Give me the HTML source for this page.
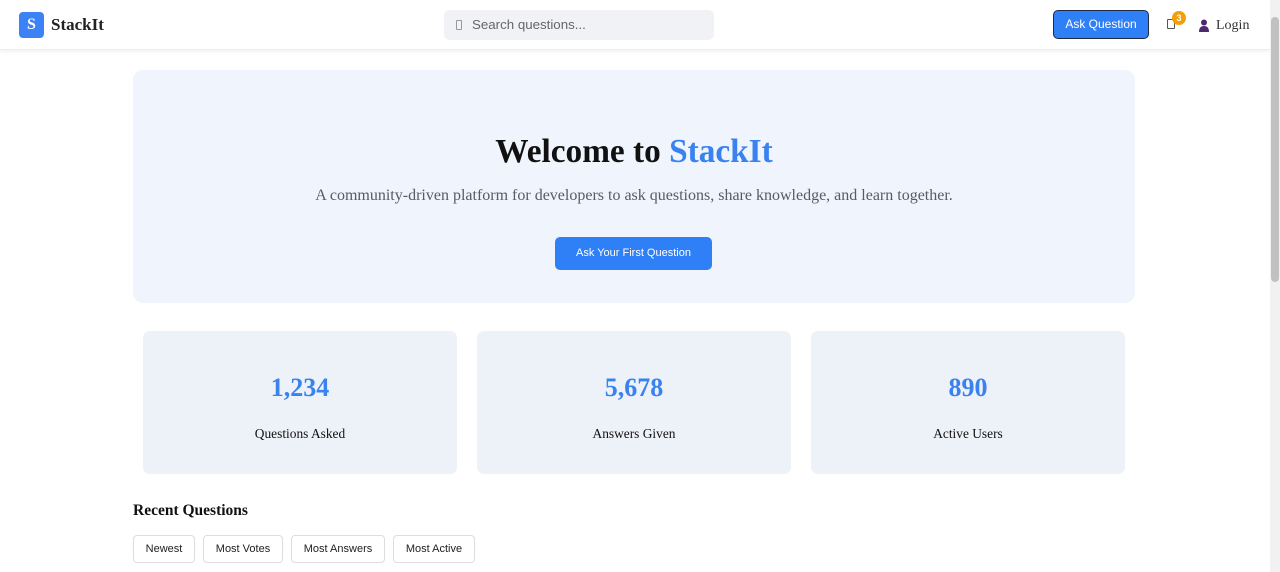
<!DOCTYPE html>
<html><head><meta charset="utf-8"><style>
*{box-sizing:border-box;margin:0;padding:0}
body{width:1280px;height:572px;overflow:hidden;background:#fff;font-family:"Liberation Serif",serif;position:relative}
.hdr{position:absolute;left:0;top:0;width:1270px;height:50px;background:#fff;box-shadow:0 1px 4px rgba(0,0,0,.08);border-bottom:1px solid #eee}
.logo{position:absolute;left:19px;top:12px;width:25px;height:26px;background:#3a82f6;border-radius:4px;color:#fff;font-weight:bold;font-size:16px;text-align:center;line-height:26px}
.brand{position:absolute;left:51px;top:15px;font-weight:bold;font-size:17px;color:#222}
.search{position:absolute;left:444px;top:10px;width:270px;height:30px;background:#f1f2f6;border-radius:6px;font-family:"Liberation Sans",sans-serif;font-size:13.3px;color:#666;padding:7px 0 0 28px}
.search i{position:absolute;left:12px;top:10px;width:6px;height:10px;border:1px solid #999;border-radius:1px}
.ask{position:absolute;left:1053px;top:10px;width:96px;height:29px;background:#2f7ff7;border:1.5px solid #1c2a44;border-radius:5px;color:#fff;font-family:"Liberation Sans",sans-serif;font-size:12px;text-align:center;line-height:26px}
.bell{position:absolute;left:1167px;top:19px;width:8px;height:10px;border:1px solid #555;border-radius:1px}
.badge{position:absolute;left:1172px;top:11px;width:14px;height:14px;border-radius:50%;background:#f59e0b;color:#fff;font-size:9px;font-family:"Liberation Sans",sans-serif;text-align:center;line-height:14px;font-weight:bold}
.login{position:absolute;left:1216px;top:18px;font-size:14px;color:#333}
.scroll{position:absolute;left:1270px;top:0;width:10px;height:572px;background:#f1f1f1}
.scroll div{position:absolute;left:1px;top:17px;width:8px;height:265px;background:#c1c1c1;border-radius:4px}
.hero{position:absolute;left:133px;top:70px;width:1002px;height:233px;background:#eff4fd;border-radius:10px;text-align:center}
.hero h1{margin-top:63px;font-size:33.3px;color:#111;font-weight:bold}
.hero p{margin-top:16px;font-size:16px;color:#555c66}
.hero h1 span{color:#3a82f0}
.btn{position:absolute;left:422px;top:167px;width:157px;height:33px;background:#2f7ff7;border-radius:5px;color:#fff;font-family:"Liberation Sans",sans-serif;font-size:11px;line-height:33px}
.card{position:absolute;top:331px;width:314px;height:143px;background:#edf1f8;border-radius:7px;text-align:center}
.card b{display:block;margin-top:42px;font-size:26px;color:#3a82f0}
.card span{display:block;margin-top:23px;font-size:13.4px;color:#111}
.rq{position:absolute;left:133px;top:502px;font-size:15.5px;font-weight:bold;color:#111}
.tab{position:absolute;top:535px;height:28px;border:1px solid #ddd;border-radius:4px;font-family:"Liberation Sans",sans-serif;font-size:11px;color:#222;text-align:center;line-height:26px;background:#fff}
</style></head><body>
<div class="hdr">
<div class="logo">S</div><div class="brand">StackIt</div>
<div class="search"><i></i>Search questions...</div>
<div class="ask">Ask Question</div>
<div class="bell"></div><div class="badge">3</div>
<svg style="position:absolute;left:1198px;top:19px" width="12" height="13" viewBox="0 0 12 13"><circle cx="6" cy="3.5" r="3" fill="#4b2a6e"/><path d="M1 13 Q1 7 6 7 Q11 7 11 13Z" fill="#4b2a6e"/></svg>
<div class="login">Login</div>
</div>
<div class="scroll"><div></div></div>
<div class="hero"><h1>Welcome to <span>StackIt</span></h1>
<p>A community-driven platform for developers to ask questions, share knowledge, and learn together.</p>
<div class="btn">Ask Your First Question</div></div>
<div class="card" style="left:143px"><b>1,234</b><span>Questions Asked</span></div>
<div class="card" style="left:477px"><b>5,678</b><span>Answers Given</span></div>
<div class="card" style="left:811px"><b>890</b><span>Active Users</span></div>
<div class="rq">Recent Questions</div>
<div class="tab" style="left:133px;width:62px">Newest</div>
<div class="tab" style="left:203px;width:80px">Most Votes</div>
<div class="tab" style="left:291px;width:94px">Most Answers</div>
<div class="tab" style="left:393px;width:82px">Most Active</div>
</body></html>
